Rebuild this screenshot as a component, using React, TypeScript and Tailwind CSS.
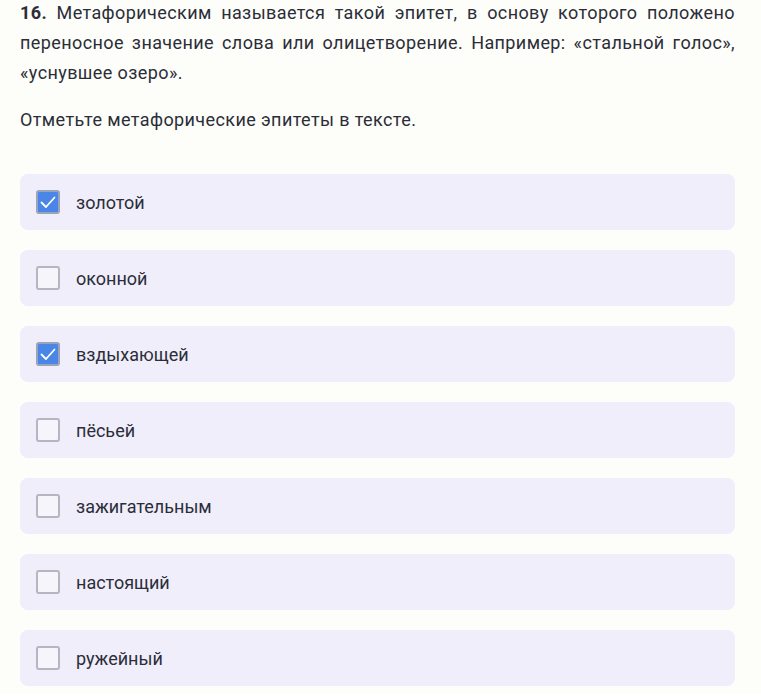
import React from 'react';

const options = [
  { label: 'золотой', checked: true },
  { label: 'оконной', checked: false },
  { label: 'вздыхающей', checked: true },
  { label: 'пёсьей', checked: false },
  { label: 'зажигательным', checked: false },
  { label: 'настоящий', checked: false },
  { label: 'ружейный', checked: false },
];

const Checkbox: React.FC<{ checked: boolean }> = ({ checked }) =>
  checked ? (
    <span className="flex h-6 w-6 shrink-0 items-center justify-center rounded-[3px] border-2 border-[#9aa4b8] bg-[#4a86e8]">
      <svg viewBox="0 0 20 20" className="h-5 w-5" fill="none" stroke="white" strokeWidth="1.8" strokeLinecap="round" strokeLinejoin="round">
        <path d="M3.5 10.5l4.5 4.5 8.5-9.5" />
      </svg>
    </span>
  ) : (
    <span className="h-6 w-6 shrink-0 rounded-[3px] border-2 border-[#b4b6c0] bg-[#f6f5fc]" />
  );

export default function App() {
  return (
    <div className="min-h-[696px] bg-[#fdfdf9] pl-5 pr-[26px] font-['Roboto',sans-serif] text-[#2b2d38]">
      <p className="-mt-0.5 text-justify text-[18px] leading-[30px] tracking-[0.4px]">
        <b className="font-bold">16.</b> Метафорическим называется такой эпитет, в основу которого положено
        переносное значение слова или олицетворение. Например: «стальной голос»,
        «уснувшее озеро».
      </p>
      <p className="mt-[17px] text-[18px] leading-[30px] tracking-[0.4px]">
        Отметьте метафорические эпитеты в тексте.
      </p>
      <div className="mt-[39px] flex flex-col gap-5">
        {options.map((o) => (
          <label key={o.label} className="flex h-14 items-center gap-4 rounded-lg bg-[#f0eefb] px-4 text-[18px]">
            <Checkbox checked={o.checked} />
            <span>{o.label}</span>
          </label>
        ))}
      </div>
    </div>
  );
}
